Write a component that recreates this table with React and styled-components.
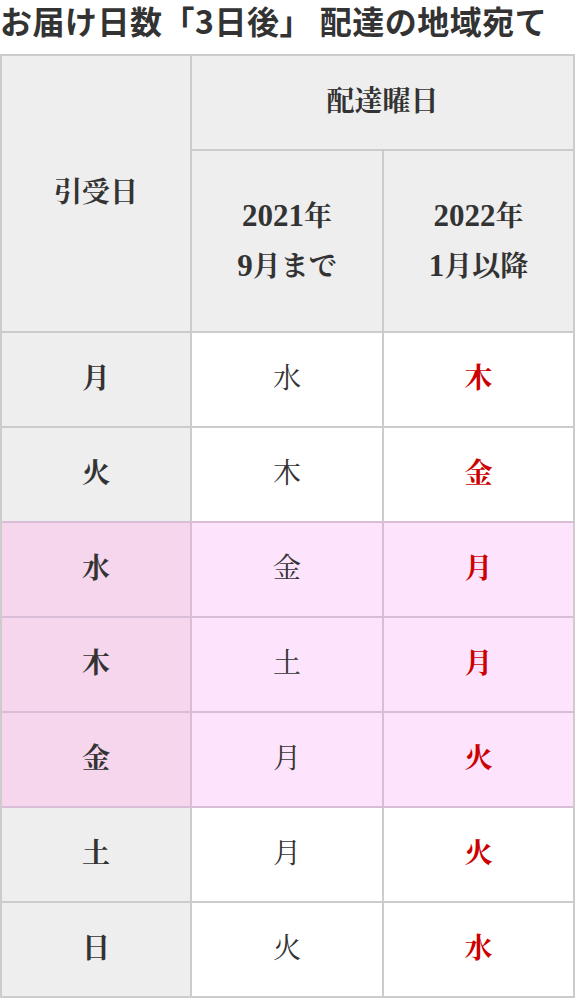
import React from "react";
import styled, { createGlobalStyle } from "styled-components";

const GlobalStyle = createGlobalStyle`
  html, body { margin: 0; padding: 0; background: #ffffff; }
  body { font-family: "Liberation Serif", "Noto Serif CJK JP", "Noto Sans CJK JP", serif; }
`;

const GRAY = "#cccccc";
const PINK_LINE = "#d9bcd5";

const Page = styled.div`
  width: 575px;
`;

const Title = styled.h2`
  margin: 0 0 14px 0;
  font-family: "Noto Sans CJK JP", "Noto Sans", sans-serif;
  font-size: 32px;
  line-height: 40px;
  font-weight: 700;
  color: #333333;
  letter-spacing: 0.5px;
`;

const Table = styled.table`
  width: 575px;
  table-layout: fixed;
  border-collapse: separate;
  border-spacing: 0;
  border-top: 2px solid ${GRAY};
  border-left: 2px solid ${GRAY};
  font-family: "Liberation Serif", "Noto Serif CJK JP", "Noto Sans CJK JP", serif;
  font-size: 28px;
  line-height: 1.6;
  color: #333333;
`;

const Cell = styled.td`
  box-sizing: border-box;
  height: ${(p) => p.$h || 95}px;
  padding: 0;
  text-align: center;
  vertical-align: middle;
  border-right: 2px solid ${(p) => p.$rightColor || GRAY};
  border-bottom: 2px solid ${(p) => p.$bottomColor || GRAY};
  background: ${(p) => p.$bg || "#ffffff"};
  font-weight: ${(p) => (p.$bold ? 700 : 400)};
  color: ${(p) => p.$color || "#333333"};
`;

const HeadCell = styled(Cell).attrs({ as: "th" })`
  background: #eeeeee;
  font-weight: 700;
`;

const Num = styled.span`
  font-size: 31px;
`;

const rows = [
  ["月", "水", "木", false],
  ["火", "木", "金", false],
  ["水", "金", "月", true],
  ["木", "土", "月", true],
  ["金", "月", "火", true],
  ["土", "月", "火", false],
  ["日", "火", "水", false],
];

export default function App() {
  return (
    <Page>
      <GlobalStyle />
      <Title>お届け日数「3日後」 配達の地域宛て</Title>
      <Table>
        <colgroup>
          <col style={{ width: 190 }} />
          <col style={{ width: 192 }} />
          <col style={{ width: 191 }} />
        </colgroup>
        <thead>
          <tr>
            <HeadCell rowSpan={2} $h={277}>引受日</HeadCell>
            <HeadCell colSpan={2} $h={95}>配達曜日</HeadCell>
          </tr>
          <tr>
            <HeadCell $h={182}>
              <Num>2021</Num>年
              <br />
              <Num>9</Num>月まで
            </HeadCell>
            <HeadCell $h={182}>
              <Num>2022</Num>年
              <br />
              <Num>1</Num>月以降
            </HeadCell>
          </tr>
        </thead>
        <tbody>
          {rows.map(([a, b, c, pink], i) => {
            const nextPink = rows[i + 1] && rows[i + 1][3];
            const bottom = pink || nextPink ? PINK_LINE : GRAY;
            const right = pink ? PINK_LINE : GRAY;
            return (
              <tr key={i}>
                <Cell $bg={pink ? "#f6d6ec" : "#eeeeee"} $bold $bottomColor={bottom} $rightColor={right}>
                  {a}
                </Cell>
                <Cell $bg={pink ? "#fde4fc" : "#ffffff"} $bottomColor={bottom} $rightColor={right}>
                  {b}
                </Cell>
                <Cell $bg={pink ? "#fde4fc" : "#ffffff"} $bold $color="#cc0000" $bottomColor={bottom} $rightColor={GRAY}>
                  {c}
                </Cell>
              </tr>
            );
          })}
        </tbody>
      </Table>
    </Page>
  );
}
